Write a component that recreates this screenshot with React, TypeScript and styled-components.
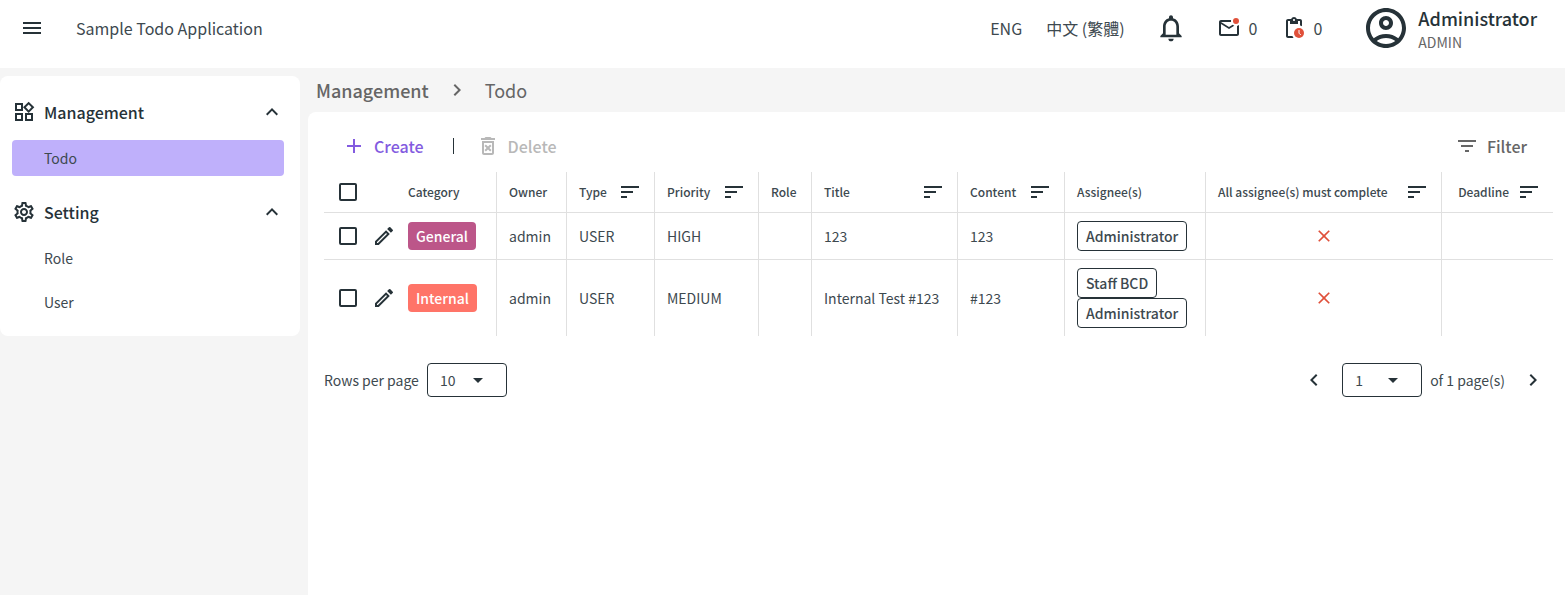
import React, { useId, useState } from 'react';
import styled, { createGlobalStyle, css } from 'styled-components';
import {
  MdAdd,
  MdArrowDropDown,
  MdChevronLeft,
  MdChevronRight,
  MdClose,
  MdExpandLess,
  MdFilterList,
  MdMenu,
  MdNotificationsNone,
  MdOutlineAccountCircle,
  MdOutlineDeleteForever,
  MdOutlineModeEdit,
  MdOutlineSettings,
  MdOutlineWidgets,
  MdSort,
} from 'react-icons/md';

const color = {
  ink: '#263238',
  text: '#3d494f',
  muted: '#666666',
  disabled: '#b8b8b8',
  line: '#e0e0e0',
  page: '#f5f5f5',
  accent: '#835be0',
  selected: '#bfb0fb',
  danger: '#e0503a',
};

const GlobalStyle = createGlobalStyle`
  *, *::before, *::after { box-sizing: border-box; }
  body {
    margin: 0;
    background: ${color.page};
    color: ${color.text};
    font-family: 'Noto Sans CJK TC', 'Noto Sans', sans-serif;
    font-size: 14px;
    font-weight: 400;
    line-height: 20px;
  }
  button, select, input { font: inherit; color: inherit; }
  a { color: inherit; text-decoration: none; }
  svg { display: block; flex: none; }
`;

const Page = styled.div`
  display: flex;
  flex-direction: column;
  min-height: 100vh;
`;

const PlainButton = styled.button`
  display: flex;
  align-items: center;
  padding: 0;
  border: 0;
  background: none;
  cursor: pointer;
  svg { color: ${color.ink}; }
`;

const Header = styled.header`
  display: flex;
  align-items: center;
  height: 68px;
  padding: 0 28px 12px 20px;
  background: #fff;
`;

const AppTitle = styled.h1`
  flex: 1;
  margin: 0 0 0 32px;
  font-size: 16px;
  font-weight: 400;
  line-height: 24px;
`;

const LanguageNav = styled.nav`
  display: flex;
  gap: 24px;
  margin-right: 30px;
  font-size: 16px;
  line-height: 24px;
`;

const Counters = styled.div`
  display: flex;
  gap: 24px;
  margin: 0 40px 0 30px;
`;

const Counter = styled(PlainButton)`
  gap: 8px;
  font-size: 16px;
`;

const Account = styled.div`
  display: flex;
  align-items: center;
  gap: 8px;
  color: ${color.ink};
`;

const AccountText = styled.div`
  padding-top: 4px;
`;

const AccountName = styled.div`
  font-size: 18px;
  font-weight: 500;
  line-height: 24px;
`;

const AccountRole = styled.div`
  color: ${color.muted};
  line-height: 24px;
`;

const Body = styled.div`
  display: flex;
  flex: 1;
  align-items: flex-start;
  gap: 8px;
`;

const Sidebar = styled.aside`
  flex: none;
  width: 300px;
  margin-top: 8px;
  padding: 16px 16px 16px 12px;
  border-radius: 8px;
  background: #fff;
`;

const MenuGroup = styled.section`
  & + & {
    margin-top: 16px;
  }
`;

const GroupToggle = styled(PlainButton)`
  gap: 8px;
  width: 100%;
  height: 40px;
  color: ${color.ink};
  font-size: 16px;
  font-weight: 500;
  line-height: 24px;
  text-align: left;
`;

const GroupLabel = styled.span`
  flex: 1;
`;

const MenuList = styled.ul`
  display: grid;
  gap: 8px;
  margin: 8px 0 0;
  padding: 0;
  list-style: none;
`;

const MenuLink = styled.a<{ $active?: boolean }>`
  display: block;
  padding: 8px 32px;
  border-radius: 4px;
  background: ${(p) => (p.$active ? color.selected : 'transparent')};
`;

const Main = styled.main`
  display: flex;
  flex: 1;
  flex-direction: column;
  align-self: stretch;
  min-width: 0;
`;

const Breadcrumb = styled.nav`
  display: flex;
  align-items: center;
  gap: 16px;
  height: 44px;
  padding: 0 8px;
  color: ${color.muted};
  font-size: 18px;
  line-height: 28px;
`;

const CrumbLink = styled.a`
  font-weight: 500;
`;

const Panel = styled.section`
  flex: 1;
  padding: 12px 12px 16px 16px;
  border-radius: 8px 0 0;
  background: #fff;
`;

const Toolbar = styled.div`
  display: flex;
  align-items: center;
  height: 48px;
  padding: 0 26px 4px 18px;
`;

const ToolButton = styled(PlainButton)<{ $tone: string }>`
  gap: 8px;
  color: ${(p) => p.$tone};
  font-size: 16px;
  font-weight: 500;
  line-height: 24px;
  svg { color: inherit; }
`;

const Divider = styled.span`
  width: 1px;
  height: 16px;
  margin: 0 22px 0 29px;
  background: ${color.ink};
`;

const Spacer = styled.span`
  flex: 1;
`;

const TableScroll = styled.div`
  overflow-x: auto;
`;

const Table = styled.table`
  width: 100%;
  min-width: 1229px;
  table-layout: fixed;
  border-collapse: separate;
  border-spacing: 0;
`;

const cell = css<{ $flush?: boolean }>`
  padding: 8px 12px;
  border-right: ${(p) => (p.$flush ? '0' : `1px solid ${color.line}`)};
  text-align: left;
  white-space: nowrap;
  &:last-child { border-right: 0; }
`;

const HeadCell = styled.th<{ $flush?: boolean }>`
  ${cell}
  border-bottom: 1px solid ${color.line};
  font-size: 12px;
  font-weight: 500;
`;

const Cell = styled.td<{ $flush?: boolean }>`
  ${cell}
  tr:not(:last-child) > & { border-bottom: 1px solid ${color.line}; }
`;

const CheckCell = styled(Cell)`
  padding: 0 15px;
`;

const CheckHead = styled(HeadCell)`
  padding: 0 15px;
`;

const EditCell = styled(Cell)`
  padding: 0;
`;

const CategoryCell = styled(Cell)`
  padding-left: 0;
`;

const CategoryHead = styled(HeadCell)`
  padding-left: 0;
`;

const HeadContent = styled.div<{ $end?: boolean }>`
  display: flex;
  align-items: center;
  justify-content: ${(p) => (p.$end ? 'flex-end' : 'space-between')};
  gap: 8px;
  height: 24px;
`;

const Checkbox = styled.input`
  display: block;
  appearance: none;
  width: 18px;
  height: 18px;
  margin: 0;
  border: 2px solid ${color.ink};
  border-radius: 2px;
  cursor: pointer;
  &:checked { background: ${color.accent}; }
`;

const CategoryTag = styled.span<{ $fill: string }>`
  display: inline-block;
  padding: 4px 8px;
  border-radius: 4px;
  background: ${(p) => p.$fill};
  color: #fff;
  font-weight: 500;
`;

const AssigneeList = styled.div`
  display: flex;
  flex-direction: column;
  align-items: flex-start;
`;

const AssigneeTag = styled.span`
  padding: 4px 8px;
  border: 1px solid ${color.ink};
  border-radius: 4px;
  font-weight: 500;
`;

const CrossMark = styled.span`
  display: flex;
  justify-content: center;
  color: ${color.danger};
`;

const Pager = styled.footer`
  display: flex;
  align-items: center;
  justify-content: space-between;
  padding: 27px 8px 0 0;
`;

const PagerGroup = styled.div`
  display: flex;
  align-items: center;
  gap: 8px;
`;

const SelectBox = styled.span`
  position: relative;
  display: inline-flex;
  color: ${color.ink};
`;

const Select = styled.select`
  appearance: none;
  width: 80px;
  height: 34px;
  padding: 0 12px;
  border: 1px solid ${color.ink};
  border-radius: 4px;
  background: #fff;
  color: ${color.text};
`;

const SelectArrow = styled(MdArrowDropDown)`
  position: absolute;
  top: 5px;
  right: 17px;
  pointer-events: none;
`;

const PageStep = styled(PlainButton)`
  & + ${SelectBox} { margin-left: 8px; }
  ${PagerGroup} > span + & { margin-left: 8px; }
`;

function MailIcon() {
  return (
    <svg width="24" height="24" viewBox="0 0 24 24" aria-hidden="true">
      <path
        fill="currentColor"
        d="M22 8.98V18c0 1.100-.9 2-2 2H4c-1.100 0-2-.9-2-2V6c0-1.100.9-2 2-2h10.100c-.06.320-.1.660-.1 1s.04.680.1 1H4l8 5 3.670-2.290c.470.430 1.020.760 1.630.980L12 13 4 8v10h16V9.900c.740-.150 1.420-.480 2-.920z"
      />
      <circle cx="19" cy="5" r="3" fill={color.danger} />
    </svg>
  );
}

function ClipboardIcon() {
  return (
    <svg width="24" height="24" viewBox="0 0 24 24" aria-hidden="true">
      <path
        fill="currentColor"
        d="M19 3h-3.180C15.400 1.840 14.300 1 13 1s-2.400.840-2.820 2H7c-1.100 0-2 .9-2 2v15c0 1.100.9 2 2 2h5.600c-.5-.6-.9-1.270-1.150-2H7V5h2v3h8V5h2v4.600c.7.080 1.380.260 2 .530V5c0-1.100-.9-2-2-2zm-6 2c-.550 0-1-.450-1-1s.450-1 1-1 1 .450 1 1-.450 1-1 1z"
      />
      <circle cx="18" cy="17" r="5" fill={color.danger} />
      <path d="M18 14v3.200l1.800 1.800" fill="none" stroke="#fff" strokeWidth="1" />
    </svg>
  );
}

interface GroupProps {
  label: string;
  icon: React.ReactNode;
  items: string[];
  active?: string;
}

function SideGroup({ label, icon, items, active }: GroupProps) {
  const [open, setOpen] = useState(true);
  return (
    <MenuGroup>
      <GroupToggle aria-expanded={open} onClick={() => setOpen(!open)}>
        {icon}
        <GroupLabel>{label}</GroupLabel>
        <MdExpandLess size={24} />
      </GroupToggle>
      {open && (
        <MenuList>
          {items.map((item) => (
            <li key={item}>
              <MenuLink href={`#${item}`} $active={item === active}>
                {item}
              </MenuLink>
            </li>
          ))}
        </MenuList>
      )}
    </MenuGroup>
  );
}

interface Column {
  label: string;
  width?: number;
  sortable?: boolean;
}

const columns: Column[] = [
  { label: 'Owner', width: 70 },
  { label: 'Type', width: 88, sortable: true },
  { label: 'Priority', width: 104, sortable: true },
  { label: 'Role', width: 53 },
  { label: 'Title', width: 146, sortable: true },
  { label: 'Content', width: 107, sortable: true },
  { label: 'Assignee(s)', width: 141 },
  { label: 'All assignee(s) must complete', width: 236, sortable: true },
  { label: 'Deadline', sortable: true },
];

const todos = [
  {
    category: 'General',
    fill: '#bc5689',
    priority: 'HIGH',
    title: '123',
    content: '123',
    assignees: ['Administrator'],
  },
  {
    category: 'Internal',
    fill: '#ff7468',
    priority: 'MEDIUM',
    title: 'Internal Test #123',
    content: '#123',
    assignees: ['Staff BCD', 'Administrator'],
  },
];

function TodoTable() {
  return (
    <TableScroll>
      <Table>
        <colgroup>
          <col width={48} />
          <col width={36} />
          <col width={89} />
          {columns.map((c) => (
            <col key={c.label} width={c.width} />
          ))}
        </colgroup>
        <thead>
          <tr>
            <CheckHead $flush>
              <Checkbox type="checkbox" aria-label="Select all" />
            </CheckHead>
            <HeadCell $flush />
            <CategoryHead>Category</CategoryHead>
            {columns.map((c) => (
              <HeadCell key={c.label}>
                <HeadContent $end={!c.width}>
                  {c.label}
                  {c.sortable && (
                    <PlainButton aria-label={`Sort by ${c.label}`}>
                      <MdSort size={24} />
                    </PlainButton>
                  )}
                </HeadContent>
              </HeadCell>
            ))}
          </tr>
        </thead>
        <tbody>
          {todos.map((todo) => (
            <tr key={todo.category}>
              <CheckCell $flush>
                <Checkbox type="checkbox" aria-label={`Select ${todo.title}`} />
              </CheckCell>
              <EditCell $flush>
                <PlainButton aria-label={`Edit ${todo.title}`}>
                  <MdOutlineModeEdit size={24} />
                </PlainButton>
              </EditCell>
              <CategoryCell>
                <CategoryTag $fill={todo.fill}>{todo.category}</CategoryTag>
              </CategoryCell>
              <Cell>admin</Cell>
              <Cell>USER</Cell>
              <Cell>{todo.priority}</Cell>
              <Cell />
              <Cell>{todo.title}</Cell>
              <Cell>{todo.content}</Cell>
              <Cell>
                <AssigneeList>
                  {todo.assignees.map((name) => (
                    <AssigneeTag key={name}>{name}</AssigneeTag>
                  ))}
                </AssigneeList>
              </Cell>
              <Cell>
                <CrossMark role="img" aria-label="No">
                  <MdClose size={20} />
                </CrossMark>
              </Cell>
              <Cell />
            </tr>
          ))}
        </tbody>
      </Table>
    </TableScroll>
  );
}

export default function App() {
  const rowsId = useId();
  return (
    <Page>
      <GlobalStyle />
      <Header>
        <PlainButton aria-label="Menu">
          <MdMenu size={24} />
        </PlainButton>
        <AppTitle>Sample Todo Application</AppTitle>
        <LanguageNav>
          <a href="#en">ENG</a>
          <a href="#zh">中文 (繁體)</a>
        </LanguageNav>
        <PlainButton aria-label="Notifications">
          <MdNotificationsNone size={32} />
        </PlainButton>
        <Counters>
          <Counter aria-label="Messages">
            <MailIcon />0
          </Counter>
          <Counter aria-label="Tasks">
            <ClipboardIcon />0
          </Counter>
        </Counters>
        <Account>
          <MdOutlineAccountCircle size={48} />
          <AccountText>
            <AccountName>Administrator</AccountName>
            <AccountRole>ADMIN</AccountRole>
          </AccountText>
        </Account>
      </Header>
      <Body>
        <Sidebar>
          <SideGroup
            label="Management"
            icon={<MdOutlineWidgets size={24} />}
            items={['Todo']}
            active="Todo"
          />
          <SideGroup
            label="Setting"
            icon={<MdOutlineSettings size={24} />}
            items={['Role', 'User']}
          />
        </Sidebar>
        <Main>
          <Breadcrumb aria-label="Breadcrumb">
            <CrumbLink href="#management">Management</CrumbLink>
            <MdChevronRight size={24} />
            <span>Todo</span>
          </Breadcrumb>
          <Panel>
            <Toolbar>
              <ToolButton $tone={color.accent}>
                <MdAdd size={24} />
                Create
              </ToolButton>
              <Divider />
              <ToolButton $tone={color.disabled} disabled>
                <MdOutlineDeleteForever size={24} />
                Delete
              </ToolButton>
              <Spacer />
              <ToolButton $tone={color.muted}>
                <MdFilterList size={24} />
                Filter
              </ToolButton>
            </Toolbar>
            <TodoTable />
            <Pager>
              <PagerGroup>
                <label htmlFor={rowsId}>Rows per page</label>
                <SelectBox>
                  <Select id={rowsId} defaultValue="10">
                    <option>10</option>
                    <option>20</option>
                    <option>50</option>
                  </Select>
                  <SelectArrow size={24} />
                </SelectBox>
              </PagerGroup>
              <PagerGroup>
                <PageStep aria-label="Previous page">
                  <MdChevronLeft size={24} />
                </PageStep>
                <SelectBox>
                  <Select aria-label="Page" defaultValue="1">
                    <option>1</option>
                  </Select>
                  <SelectArrow size={24} />
                </SelectBox>
                <span>of 1 page(s)</span>
                <PageStep aria-label="Next page">
                  <MdChevronRight size={24} />
                </PageStep>
              </PagerGroup>
            </Pager>
          </Panel>
        </Main>
      </Body>
    </Page>
  );
}
